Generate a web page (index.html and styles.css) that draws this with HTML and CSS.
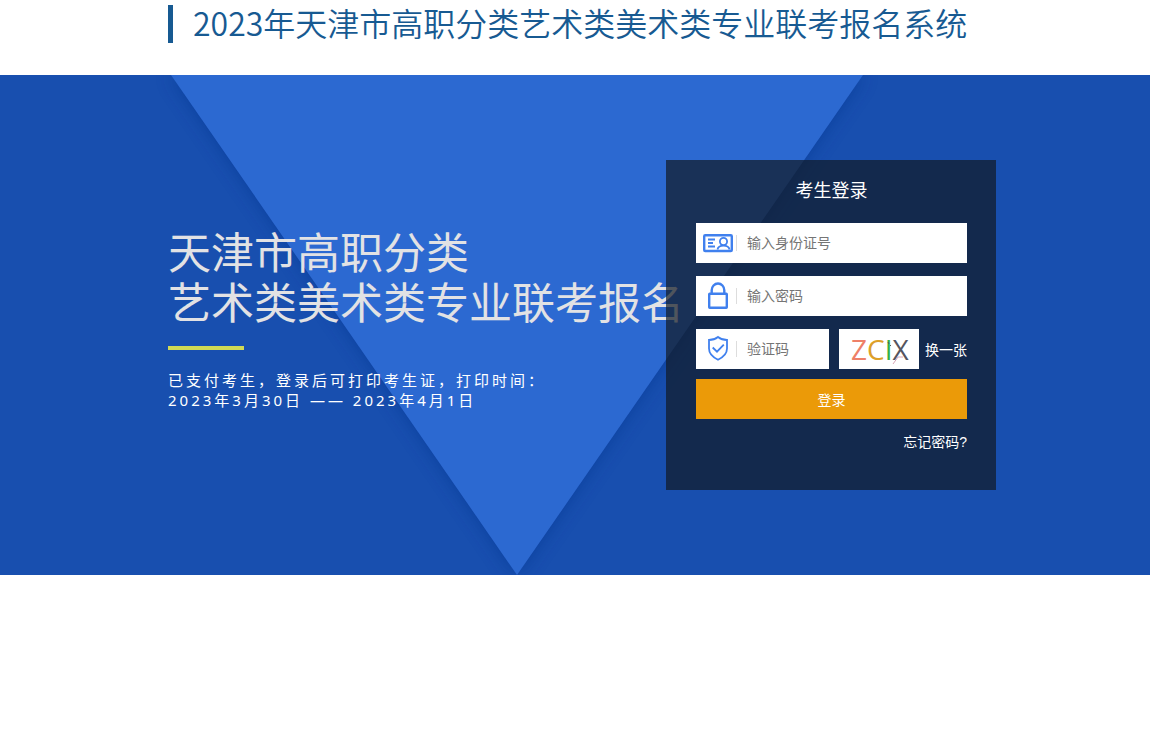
FILE: index.html
```html
<!DOCTYPE html>
<html lang="zh-CN">
<head>
    <meta charset="UTF-8">
    <meta name="viewport" content="width=device-width, initial-scale=1.0">
    <title>2023年天津市高职分类艺术类美术类专业联考报名系统</title>
    <link rel="stylesheet" href="styles.css">
</head>
<body>

    <header class="header">
        <h1 class="site-title">2023年天津市高职分类艺术类美术类专业联考报名系统</h1>
    </header>

    <main class="banner">
        <!-- Banner background -->
        <svg class="banner-bg" width="1034" height="500" viewBox="0 0 1034 500" aria-hidden="true">
            <defs>
                <filter id="shade" x="-10%" y="-10%" width="120%" height="120%">
                    <feGaussianBlur stdDeviation="9"/>
                </filter>
            </defs>
            <path d="M171 0H863L517 500Z" fill="#0b3590" opacity="0.6" filter="url(#shade)"/>
            <path d="M171 0H863L517 500Z" fill="#2c69d1"/>
        </svg>

        <section class="slogan">
            <h2>天津市高职分类<br>艺术类美术类专业联考报名</h2>
            <div class="line"></div>
            <p>已支付考生，登录后可打印考生证，打印时间：<br>2023年3月30日 —— 2023年4月1日</p>
        </section>

        <form class="login-box">
            <h3>考生登录</h3>

            <div class="field">
                <label for="idCard" aria-label="身份证号">
                    <svg width="30" height="28" viewBox="0 0 30 28" fill="none" stroke="#4080ee" stroke-width="1.8">
                        <rect x="1.2" y="6.2" width="27.6" height="15.8" rx="1" stroke-width="2.4"/>
                        <path d="M5 10.500h7M5 14h5M5 17.500h7"/>
                        <circle cx="20.5" cy="12.5" r="3.6"/>
                        <path d="M14.500 20.500c.5-2.500 3-3.800 6-3.800s5.500 1.300 6 3.800"/>
                    </svg>
                </label>
                <input type="text" id="idCard" name="idCard" placeholder="输入身份证号">
            </div>

            <div class="field">
                <label for="password" aria-label="密码">
                    <svg width="30" height="28" viewBox="0 0 30 28" fill="none" stroke="#4080ee" stroke-width="2.4">
                        <rect x="6.2" y="11.7" width="17.6" height="14.1" rx="0.5"/>
                        <path d="M8.700 11.500V8.300a6.300 6.800 0 0 1 12.600 0V11.500"/>
                    </svg>
                </label>
                <input type="password" id="password" name="password" placeholder="输入密码">
            </div>

            <div class="code-row">
                <div class="field">
                    <label for="code" aria-label="验证码">
                        <svg width="30" height="28" viewBox="0 0 30 28" fill="none" stroke="#4080ee" stroke-width="1.8">
                            <path d="M15 2c2.500 2 5.500 3 9 3v8.500c0 5.500-4 8.800-9 11.200c-5-2.400-9-5.700-9-11.200V5c3.500 0 6.500-1 9-3Z"/>
                            <path d="M9.700 12.500l4.300 4.200l6.800-7"/>
                        </svg>
                    </label>
                    <input type="text" id="code" name="code" placeholder="验证码">
                </div>
                <div class="captcha">
                    <span class="c1">Z</span><span class="c2">C</span><span class="c3">I</span><span class="c4">X</span>
                    <svg class="noise" width="80" height="40" viewBox="0 0 80 40" aria-hidden="true">
                        <path d="M49 13l1 2M51 16l1 1" stroke="#555" stroke-width="1"/>
                        <path d="M54 35l5-7h5" stroke="#d9a5b5" stroke-width="1" fill="none"/>
                    </svg>
                </div>
                <a href="#">换一张</a>
            </div>

            <button type="submit">登录</button>
            <a class="forget" href="#">忘记密码?</a>
        </form>
    </main>

</body>
</html>
```
FILE: styles.css
```css
* {
    box-sizing: border-box;
}

body {
    margin: 0;
    background: #fff;
    font-family: "Liberation Sans", "Noto Sans CJK SC", sans-serif;
    font-size: 14px;
}

h1, h2, h3, p {
    margin: 0;
    font-weight: normal;
}

a {
    color: #fff;
    text-decoration: none;
}

/* Header */
.header {
    height: 75px;
    padding: 5px 154px 0 168px;
}

.site-title {
    padding: 0 0 4px 20px;
    border-left: 5px solid #175a92;
    color: #175a92;
    font-family: "Noto Sans CJK SC", sans-serif;
    font-size: 32px;
    font-weight: 350;
    line-height: 34px;
    white-space: nowrap;
}

/* Banner */
.banner {
    position: relative;
    display: flex;
    align-items: center;
    justify-content: space-between;
    min-height: 500px;
    padding: 0 154px 0 168px;
    background: #184faf;
    overflow: hidden;
}

.banner-bg {
    position: absolute;
    top: 0;
    left: 0;
}

.slogan {
    position: relative;
    flex: 1;
    min-width: 0;
    padding-bottom: 12px;
    color: #fff;
    white-space: nowrap;
}

.slogan h2 {
    color: #e2e2e4;
    font-size: 43px;
    font-weight: 400;
    line-height: 50px;
}

.slogan .line {
    width: 76px;
    height: 4px;
    margin: 17px 0 20px;
    background: #d0da55;
}

.slogan p {
    font-family: "Noto Sans", "Noto Sans CJK SC", sans-serif;
    font-size: 15px;
    line-height: 20px;
    letter-spacing: 3px;
}

/* Login box */
.login-box {
    position: relative;
    flex: none;
    width: 330px;
    min-height: 330px;
    padding: 16px 29px 0 30px;
    background: rgba(17, 25, 35, 0.7);
    color: #fff;
}

.login-box h3 {
    margin-bottom: 17px;
    font-size: 18px;
    line-height: 30px;
    text-align: center;
}

.field {
    display: flex;
    align-items: center;
    height: 40px;
    margin-bottom: 13px;
    background: #fff;
}

.field label {
    display: flex;
    align-items: center;
    padding-left: 7px;
}

.field label::after {
    content: "";
    width: 1px;
    height: 16px;
    margin-left: 3px;
    background: #ddd;
}

.field input {
    flex: 1;
    min-width: 0;
    height: 40px;
    padding: 0 10px;
    border: none;
    outline: none;
    background: none;
    font-family: inherit;
    font-size: 14px;
}

.field input::placeholder {
    color: #757575;
}

.code-row {
    display: flex;
    align-items: center;
    margin-bottom: 10px;
}

.code-row .field {
    flex: 1;
    min-width: 0;
    margin: 0 10px 0 0;
}

/* Captcha */
.captcha {
    position: relative;
    display: flex;
    align-items: center;
    width: 80px;
    height: 40px;
    margin-right: 6px;
    padding-left: 12px;
    background: #fff;
    font-family: "Open Sans", sans-serif;
    font-size: 28px;
}

.captcha .c1 {
    color: #ee8068;
}

.captcha .c2 {
    color: #dda028;
}

.captcha .c3 {
    color: #35b045;
}

.captcha .c4 {
    color: #555560;
}

.captcha .noise {
    position: absolute;
    top: 0;
    left: 0;
}

.login-box button {
    display: block;
    width: 100%;
    height: 40px;
    padding: 0;
    border: none;
    background: #eb9a08;
    color: #fff;
    font-family: inherit;
    font-size: 14px;
    cursor: pointer;
}

.forget {
    display: block;
    margin-top: 13px;
    line-height: 20px;
    text-align: right;
}
```
